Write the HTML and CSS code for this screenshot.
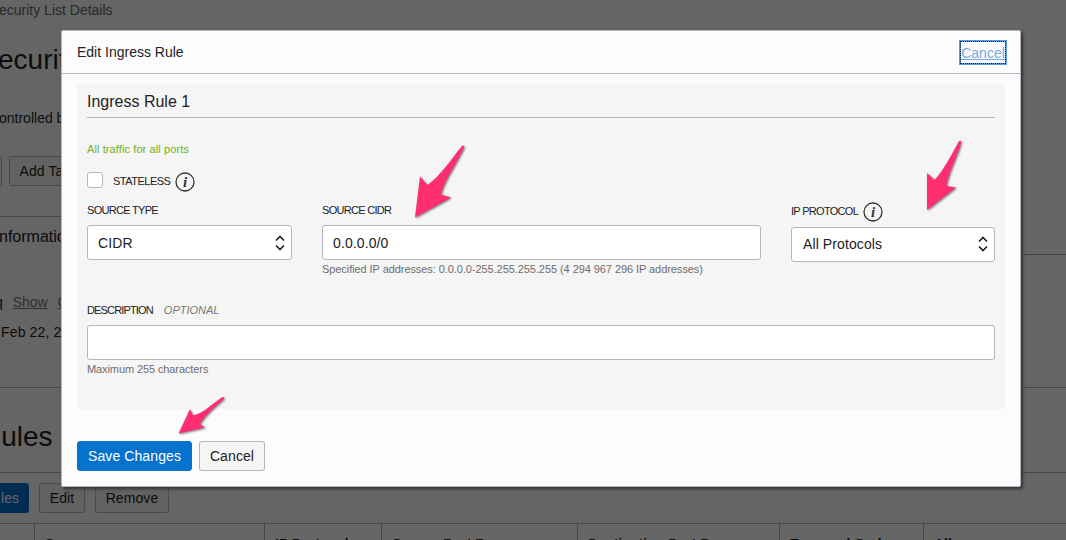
FILE: index.html
```html
<!DOCTYPE html>
<html lang="en">
<head>
<meta charset="utf-8">
<title>Edit Ingress Rule</title>
<link rel="stylesheet" href="styles.css">
</head>
<body>
<div class="page">
  <div class="crumb">ecurity List Details</div>
  <div class="title">ecurity</div>
  <div class="note">ontrolled by</div>
  <div class="actions"><span class="btn sliver"></span><span class="btn tags">Add Tags</span></div>
  <div class="split"><div class="rule"></div><div class="side"></div></div>
  <div class="info">nformation</div>
  <div class="links">q <a>Show</a> <a>Copy</a></div>
  <div class="date">Feb 22, 2019</div>
  <div class="rule"></div>
  <div class="rules">Rules</div>
  <div class="toolbar"><span class="btn primary add">les</span><span class="btn edit">Edit</span><span class="btn remove">Remove</span></div>
  <div class="table"><span></span><span>Source</span><span>IP Protocol</span><span>Source Port Range</span><span>Destination Port Range</span><span>Type and Code</span><span>Allows</span></div>
</div>
<div class="overlay"></div>
<section class="modal">
  <header class="head"><span>Edit Ingress Rule</span><a class="close">Cancel</a></header>
  <div class="panel">
    <h2>Ingress Rule 1</h2>
    <div class="traffic">All traffic for all ports</div>
    <div class="stateless"><span class="box"></span><span class="caps">STATELESS</span>
      <svg class="i" viewBox="0 0 20 20"><circle cx="10" cy="10" r="9"/><text x="10" y="14.500" text-anchor="middle">i</text></svg>
    </div>
    <div class="fields">
      <div class="type"><label>SOURCE TYPE</label><div class="input">CIDR<svg class="caret" viewBox="0 0 10 16"><path d="M1 5.5 5 1.5 9 5.500M1 10.500 5 14.500 9 10.500"/></svg></div></div>
      <div class="cidr"><label>SOURCE CIDR</label><div class="input">0.0.0.0/0</div><div class="hint">Specified IP addresses: 0.0.0.0-255.255.255.255 (4 294 967 296 IP addresses)</div></div>
      <div class="proto"><label><span>IP PROTOCOL</span><svg class="i" viewBox="0 0 20 20"><circle cx="10" cy="10" r="9"/><text x="10" y="14.500" text-anchor="middle">i</text></svg></label><div class="input">All Protocols<svg class="caret" viewBox="0 0 10 16"><path d="M1 5.500 5 1.500 9 5.500M1 10.500 5 14.500 9 10.500"/></svg></div></div>
    </div>
    <div class="desc"><label><span>DESCRIPTION</span><em>OPTIONAL</em></label><div class="input"></div><div class="hint max">Maximum 255 characters</div></div>
  </div>
  <footer class="foot"><span class="btn primary save">Save Changes</span><span class="btn cancel">Cancel</span></footer>
</section>
<svg class="arrows" viewBox="0 0 1066 540">
  <path d="M415 217.500 420 176.500 427.500 185C439.500 177 450.500 160 462 146Q464 144.500 464.300 147C456.500 164 444.500 180 441 194.500L451 197.500Z"/>
  <path d="M927 210V173L934.500 180C943 171 952 154 958.500 142Q960.500 139.500 961.300 142C957 158 948 173 946.500 186L956 187.500Z"/>
  <path d="M178.500 433.500 190 409 193 415.500C204 413 213 403 222.500 397Q224.500 396.500 224 399C216 406 205 415 200 424L205 427.500Z"/>
</svg>
</body>
</html>
```
FILE: styles.css
```css
* { box-sizing: border-box; }
body { margin: 0; width: 1066px; height: 540px; overflow: hidden; position: relative; font: 14px/16px "Liberation Sans", Arial, sans-serif; color: #222; background: #fff; }
.page { width: 1066px; height: 540px; overflow: hidden; display: flex; flex-direction: column; background: #fcfcfc; white-space: nowrap; }
.crumb { height: 44px; padding-top: 2px; margin-left: -1px; color: #666; flex: none; }
.title { height: 66px; margin-left: -2px; font-size: 28px; line-height: 32px; flex: none; }
.note { height: 46px; margin-left: -1px; flex: none; }
.actions { height: 60px; display: flex; gap: 7px; flex: none; }
.btn { height: 30px; display: inline-block; border: 1px solid #b3b6c2; border-radius: 3px; background: #f5f5f5; text-align: center; line-height: 28px; letter-spacing: .1px; }
.sliver { width: 2px; border-left: 0; border-radius: 0 3px 3px 0; }
.tags { width: 80px; }
.split { display: grid; grid-template-columns: 500px 566px; height: 13px; flex: none; }
.rule { border-top: 1px solid #aaa; height: 28px; flex: none; }
.side { border-bottom: 1px solid #aaa; height: 39px; }
.info { height: 65px; margin-left: -1px; font-size: 16px; flex: none; }
.links { height: 30px; margin-left: -5px; flex: none; }
.links a { color: #777; text-decoration: underline; margin-left: 6px; }
.date { height: 55px; margin-bottom: 8px; padding-left: 1px; letter-spacing: .15px; flex: none; }
.rules { height: 58px; padding-top: 6px; margin-right: 0; text-indent: -19px; font-size: 28px; line-height: 32px; border-bottom: 1px solid #aaa; flex: none; }
.toolbar { display: flex; height: 50px; padding-top: 10px; flex: none; }
.primary { background: #0572ce; color: #fff; border-color: #0572ce; }
.add { width: 29px; text-align: right; padding-right: 10px; border-radius: 0 3px 3px 0; }
.edit { width: 46px; margin-left: 10px; }
.remove { width: 74px; margin-left: 10px; }
.table { display: grid; grid-template-columns: 35px 230px 117px 196px 202px 144px 142px; height: 40px; border-top: 1px solid #aaa; flex: none; font-weight: bold; }
.table span { border-right: 1px solid #aaa; padding: 12px 10px 0; }
.table span:last-child { border-right: 0; }
.overlay { position: absolute; inset: 0; background: rgba(0,0,0,.6); }
.modal { position: absolute; left: 61px; top: 30px; width: 960px; height: 457px; border: 1px solid #b3b6c2; border-radius: 2px; background: #fcfcfc; box-shadow: 2px 2px 3px #333; }
.head { height: 43px; display: flex; justify-content: space-between; align-items: center; padding: 0 13px 0 15px; border-bottom: 1px solid #b3b6c2; }
.close { width: 48px; height: 25px; border: 2px solid #5b9be0; outline: 1px dotted #123; outline-offset: -2px; color: #76a9df; line-height: 22px; text-align: center; text-decoration: underline; }
.panel { margin: 10px 15px 0; height: 325px; background: #f5f5f5; border-radius: 3px; padding: 0 10px; }
h2 { margin: 0; height: 34px; border-bottom: 1px solid #b3b6c2; font-size: 16px; line-height: 35px; font-weight: normal; }
.traffic, label, .stateless, .hint { font-size: 11px; line-height: 14px; }
.traffic { color: #6db31b; padding-top: 24px; height: 53px; letter-spacing: .1px; }
.stateless { display: flex; height: 32px; align-items: flex-start; line-height: 20px; }
.caps { letter-spacing: -.5px; }
.box { width: 16px; height: 16px; border: 1px solid #b3b6c2; border-radius: 3px; background: #fff; margin: 1px 10px 0 0; }
.i { width: 20px; height: 20px; fill: none; stroke: #333; stroke-width: 1.3; flex: none; }
.i text { fill: #333; stroke: none; font: italic bold 15px "Liberation Serif", serif; letter-spacing: 0; }
.stateless .i { margin: 1px 0 0 5px; }
.fields { display: flex; height: 100px; }
label { display: block; height: 22px; white-space: nowrap; letter-spacing: -.7px; }
.type { width: 205px; }
.cidr { width: 439px; margin-left: 30px; }
.proto { width: 204px; margin-left: 30px; }
.proto label { display: flex; height: 24px; line-height: 16px; gap: 5px; }
.proto .i { margin-top: -1px; }
.input { height: 35px; border: 1px solid #b3b6c2; border-radius: 3px; background: #fff; padding: 0 6px 0 10px; display: flex; align-items: center; justify-content: space-between; letter-spacing: .1px; }
.proto .input { padding-left: 11px; padding-bottom: 1px; }
.caret { width: 10px; height: 16px; fill: none; stroke: #222; stroke-width: 1.7; }
.hint { color: #6d6d6d; padding-top: 2px; letter-spacing: -.07px; }
.hint.max { letter-spacing: -.1px; }
.desc label { display: flex; gap: 11px; letter-spacing: -.85px; }
em { color: #777; letter-spacing: 0; }
.foot { display: flex; gap: 7px; padding: 32px 15px 0; }
.save { width: 115px; }
.cancel { width: 66px; }
.arrows { position: absolute; left: 0; top: 0; width: 1066px; height: 540px; fill: #ff2e70; filter: drop-shadow(1px 1px 1px #777); }
```
